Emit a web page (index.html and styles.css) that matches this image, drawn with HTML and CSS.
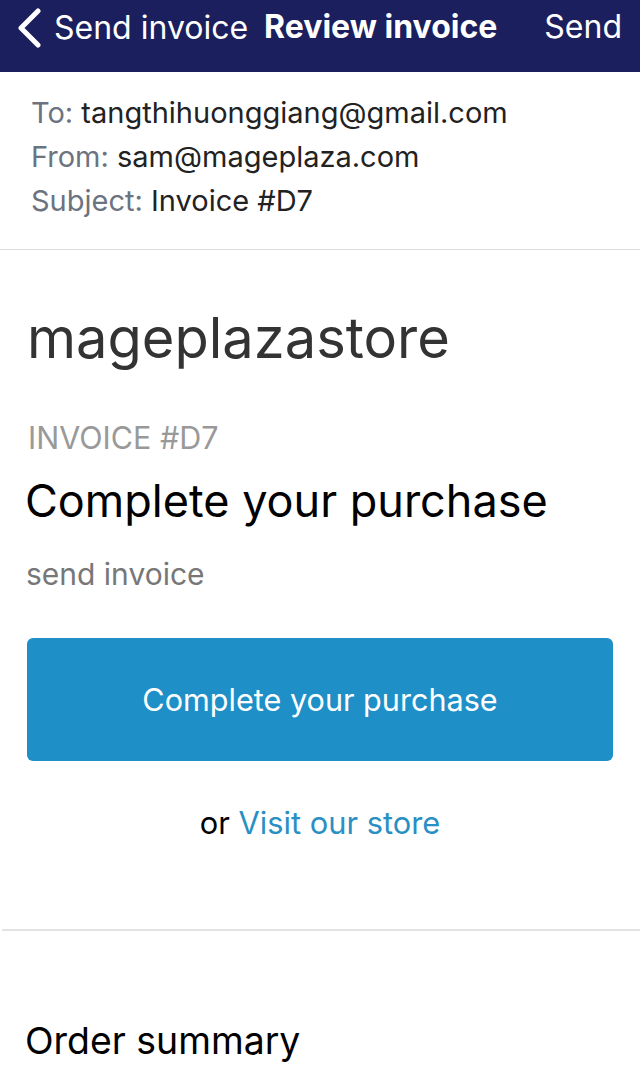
FILE: index.html
```html
<!DOCTYPE html>
<html>
<head>
<meta charset="utf-8">
<link rel="stylesheet" href="styles.css">
</head>
<body>
<header class="navbar">
  <div class="nav-back">
    <svg class="chev" width="26" height="40" viewBox="0 0 26 40"><path d="M22 3 L5 20 L22 37" fill="none" stroke="#fff" stroke-width="5" stroke-linecap="round" stroke-linejoin="round"/></svg>
    <span class="nav-back-label">Send invoice</span>
  </div>
  <div class="nav-title">Review invoice</div>
  <div class="nav-action">Send</div>
</header>
<section class="meta">
  <div class="meta-row"><span class="meta-key">To:</span> tangthihuonggiang@gmail.com</div>
  <div class="meta-row"><span class="meta-key">From:</span> sam@mageplaza.com</div>
  <div class="meta-row"><span class="meta-key">Subject:</span> Invoice #D7</div>
</section>
<main class="mail">
  <h1 class="store">mageplazastore</h1>
  <div class="invoice-no">INVOICE #D7</div>
  <h2 class="headline">Complete your purchase</h2>
  <p class="note">send invoice</p>
  <a class="btn">Complete your purchase</a>
  <p class="alt">or <a class="link">Visit our store</a></p>
  <hr class="rule">
  <h3 class="summary">Order summary</h3>
</main>
</body>
</html>
```
FILE: styles.css
```css
* { box-sizing: border-box; }
html, body { margin: 0; padding: 0; background: #fff; }
body { font-family: Inter, Roboto, "Liberation Sans", sans-serif; width: 640px; overflow: hidden; }
.navbar {
  height: 72px;
  background: #1c1f5d;
  color: #fff;
  display: flex;
  align-items: flex-start;
  padding: 7px 18px 0 16px;
  font-size: 32px;
}
.nav-back { display: flex; align-items: center; gap: 12px; }
.chev { margin-top: 1px; }
.nav-title { font-weight: 700; margin-left: 16px; }
.nav-action { margin-left: auto; }
.nav-back-label, .nav-title, .nav-action { line-height: 40px; }
.meta {
  padding: 19px 0 26px 31px;
  border-bottom: 1px solid #dcdcdc;
  font-size: 29px;
  color: #222;
}
.meta-row { line-height: 44px; }
.meta-key { color: #6b7380; }
.store {
  margin: 52px 0 0 27px;
  font-weight: 400;
  font-size: 56px;
  line-height: 72px;
  color: #333;
}
.invoice-no {
  margin: 46px 0 0 28px;
  font-size: 30.5px;
  line-height: 36px;
  color: #999;
}
.headline {
  margin: 18px 0 0 25px;
  font-weight: 400;
  font-size: 45px;
  line-height: 54px;
  color: #000;
}
.note {
  margin: 26px 0 0 26px;
  font-size: 30px;
  line-height: 40px;
  color: #777;
}
.btn {
  display: flex;
  align-items: center;
  justify-content: center;
  margin: 44px 27px 0 27px;
  height: 123px;
  background: #1e8fc7;
  border-radius: 6px;
  color: #fff;
  font-size: 30.6px;
}
.alt {
  margin: 42px 0 0 0;
  text-align: center;
  font-size: 30.8px;
  line-height: 40px;
  color: #000;
}
.link { color: #2a8fc3; }
.rule {
  margin: 86px 0 0 2px;
  border: 0;
  border-top: 2px solid #e3e3e3;
}
.summary {
  margin: 86px 0 0 25px;
  font-weight: 400;
  font-size: 37.4px;
  line-height: 48px;
  color: #000;
}
```
